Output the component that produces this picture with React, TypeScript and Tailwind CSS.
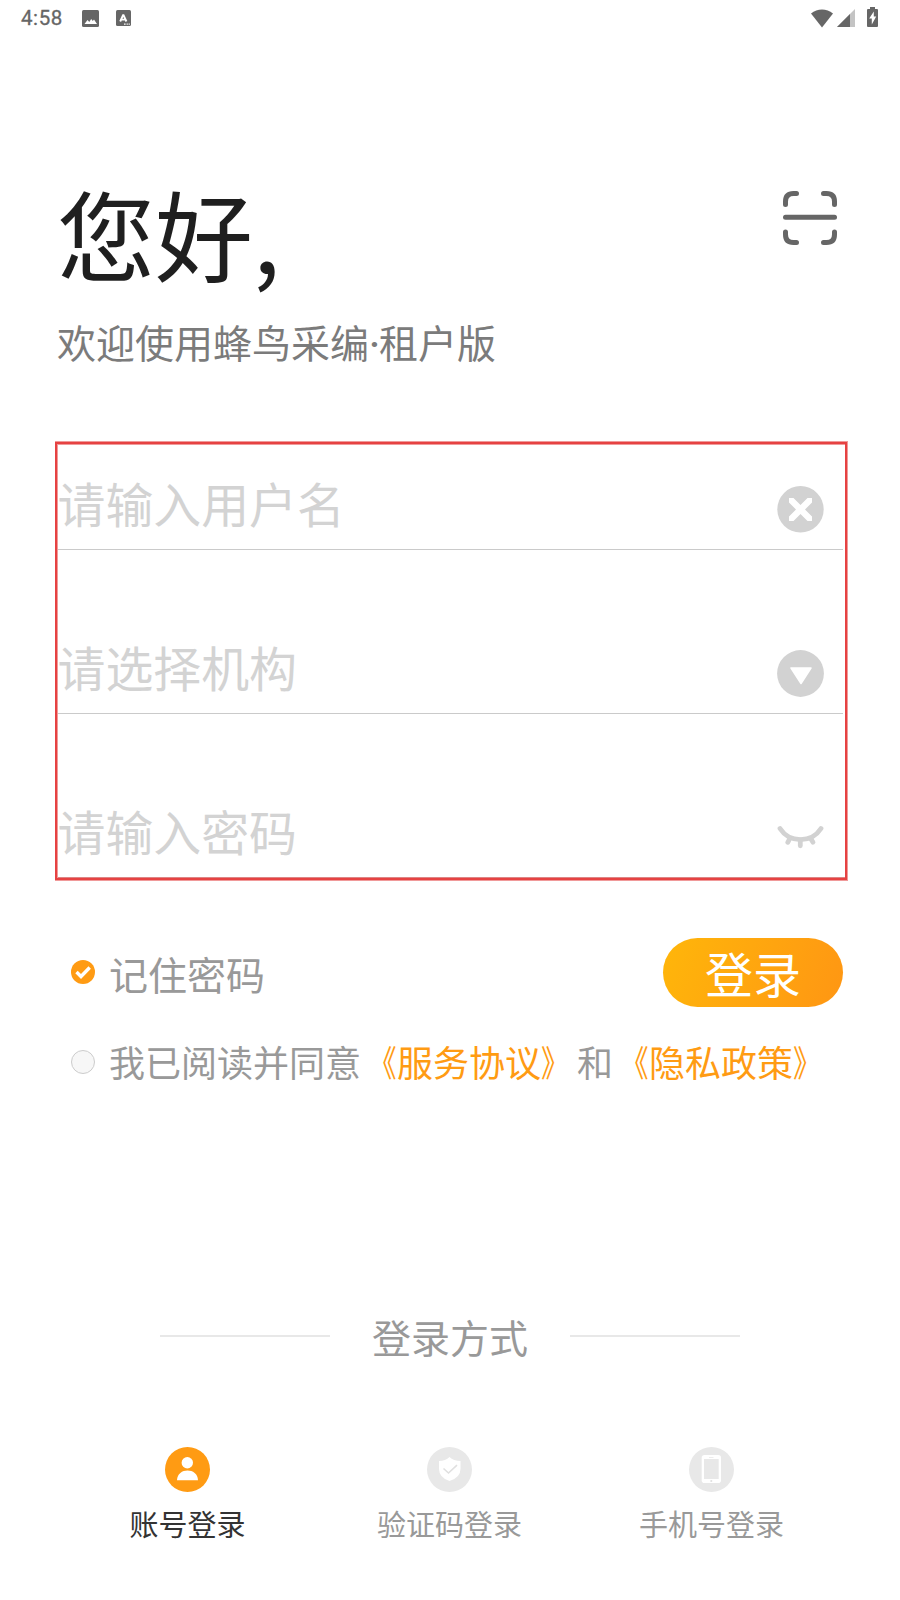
import { useState } from 'react';
import type { ReactNode } from 'react';

interface FieldProps {
  placeholder: string;
  icon: ReactNode;
  last?: boolean;
}

interface LoginMethod {
  id: string;
  label: string;
  icon: ReactNode;
}

function StatusBar() {
  return (
    <div className="flex h-9 items-center justify-between pl-[21px] pr-[21px] text-[#666666]">
      <div className="flex items-center">
        <span className="w-[61px] font-['Roboto'] text-[20.5px] font-normal leading-[38px] tracking-[0.6px] [-webkit-text-stroke:0.3px_#666666]">4:58</span>
        <svg className="mr-[17px] h-[17px] w-[17px]" viewBox="0 0 17 17">
          <rect width="17" height="17" rx="1.5" fill="currentColor" />
          <path d="M2.5 14 L5.5 10 L7.3 12 L9.2 9 L10.8 11 L12 9.5 L15 14 Z" fill="#fff" />
        </svg>
        <svg className="h-4 w-[15px]" viewBox="0 0 15 16">
          <rect width="15" height="16" rx="1.5" fill="currentColor" />
          <path d="M4.2 11.5 L7.3 4.6 L10.4 11.5 M5.4 9.6 H9.2" fill="none" stroke="#fff" strokeWidth="1.9" strokeLinejoin="bevel" />
          <path d="M8 14.2 H9.6 M10.6 14.2 H11.8 M12.6 14.2 H13.8" stroke="#fff" strokeWidth="1.3" />
        </svg>
      </div>
      <div className="flex items-center">
        <svg className="mr-1 h-[19px] w-[22px]" viewBox="0 0 22 19">
          <path d="M0 4.6 C6.5 -0.9 15.5 -0.9 22 4.6 L11 18.4 Z" fill="currentColor" />
        </svg>
        <svg className="mr-3 h-[18px] w-[18px]" viewBox="0 0 18 18">
          <path d="M18 0 V18 H0 Z" fill="#c4c4c4" />
          <path d="M13 5 V18 H0 Z" fill="currentColor" />
        </svg>
        <svg className="-mt-[2px] h-5 w-3" viewBox="0 0 12 20">
          <path d="M3 0 H8 V2 H10 Q11 2 11 3 V19 Q11 20 10 20 H1 Q0 20 0 19 V3 Q0 2 1 2 H3 Z" fill="currentColor" />
          <path d="M6.8 4.5 L2.2 11.5 H4.8 V17.5 L9.2 9.5 H6.8 Z" fill="#fff" />
        </svg>
      </div>
    </div>
  );
}

function ScanIcon() {
  return (
    <svg className="h-[54px] w-[54px]" viewBox="0 0 54 54" fill="none" stroke="#666666" strokeWidth="5" strokeLinecap="round">
      <path d="M2.5 13.5 V10.5 Q2.5 2.5 10.5 2.5 H13.5" />
      <path d="M40.5 2.5 H43.5 Q51.5 2.5 51.5 10.5 V13.5" />
      <path d="M2.5 41 V43.5 Q2.5 51.5 10.5 51.5 H13.5" />
      <path d="M40.5 51.5 H43.5 Q51.5 51.5 51.5 43.5 V41" />
      <path d="M2.5 26.3 H51.5" />
    </svg>
  );
}

function ClearIcon() {
  return (
    <svg className="h-[47px] w-[47px]" viewBox="0 0 47 47">
      <circle cx="23.5" cy="23.3" r="23.2" fill="#d2d2d2" />
      <path d="M12 12 H16.5 L23.5 19 L30.5 12 H35 V16.5 L28 23.5 L35 30.5 V35 H30.5 L23.5 28 L16.5 35 H12 V30.5 L19 23.5 L12 16.5 Z" fill="#fff" />
    </svg>
  );
}

function DropdownIcon() {
  return (
    <svg className="h-[47px] w-[47px]" viewBox="0 0 47 47">
      <circle cx="23.5" cy="23.5" r="23.4" fill="#d2d2d2" />
      <path d="M14 18 H34 L24 33.5 Z" fill="#fff" stroke="#fff" strokeWidth="1.5" strokeLinejoin="round" />
    </svg>
  );
}

function EyeClosedIcon() {
  return (
    <svg className="h-[47px] w-[47px]" viewBox="0 0 47 47" fill="none" stroke="#d2d2d2" strokeWidth="4.8" strokeLinecap="round">
      <path d="M3 14.5 C12.5 29.3 34.5 29.3 44 14.5" />
      <path d="M12.8 24.5 L10.8 28.3 M23.3 26 V31.8 M33.6 24.5 L36 28.3" />
    </svg>
  );
}

function Field({ placeholder, icon, last = false }: FieldProps) {
  return (
    <div className="h-[164px] pt-[88px]">
      <div className={`flex h-[76px] items-start justify-between border-b pr-[19px] ${last ? 'border-transparent' : 'border-[#cacaca]'}`}>
        <span className="-ml-[0.5px] text-[47.9px] leading-[56px] text-[#d3d3d3]">{placeholder}</span>
        <div className="pt-[12px]">{icon}</div>
      </div>
    </div>
  );
}

// Book-title brackets are set narrower than the surrounding characters
function AgreementLink({ title }: { title: string }) {
  return (
    <span className="text-[#ff9b13]">
      <span className="inline-block w-[36px] origin-[94%_50%] scale-x-[0.78]">《</span>
      {title}
      <span className="inline-block w-[36px] origin-[0%_50%] scale-x-[0.78]">》</span>
    </span>
  );
}

const methods: LoginMethod[] = [
  {
    id: 'account',
    label: '账号登录',
    icon: (
      <>
        <circle cx="22.3" cy="15.7" r="5.7" fill="#fff" />
        <path d="M12 33.2 C12.3 20.3 32.7 20.3 33 33.2 Z" fill="#fff" />
      </>
    ),
  },
  {
    id: 'code',
    label: '验证码登录',
    icon: (
      <>
        <path d="M22.5 10 Q26.5 13.8 33.5 14 V22 Q33.5 30.5 22.5 34 Q12 30.5 12 22 V14 Q18.5 13.8 22.5 10 Z" fill="#fff" />
        <path d="M16.5 21.5 L21.5 26 L30 18.2" fill="none" stroke="#e0e0e0" strokeWidth="1.6" />
      </>
    ),
  },
  {
    id: 'phone',
    label: '手机号登录',
    icon: (
      <>
        <rect x="12.7" y="8" width="19.3" height="28" rx="2.8" fill="#fff" />
        <rect x="15" y="12" width="14.7" height="20" fill="#e8e8e8" />
        <path d="M20 10.5 H24.5" stroke="#e8e8e8" strokeWidth="0.8" />
        <circle cx="22.3" cy="34" r="1.1" fill="#e0e0e0" />
      </>
    ),
  },
];

export default function App() {
  const [active, setActive] = useState('account');

  return (
    <div className="h-[1600px] w-[900px] overflow-hidden bg-white font-['Noto_Sans_CJK_SC',sans-serif]" lang="zh-CN">
      <StatusBar />

      {/* Greeting */}
      <div className="flex h-[405px] items-start justify-between pl-[57px] pr-[63px] pt-[145px]">
        <div>
          <h1 className="text-[98px] leading-[100px] text-[#1f1f1f]">您好,</h1>
          <p className="mt-[35px] text-[39px] leading-[50px] text-[#7b7b7b]">
            欢迎使用蜂鸟采编<span className="inline-block w-[10px] text-center font-['Roboto'] font-medium">·</span>租户版
          </p>
        </div>
        <div className="pt-[10px]">
          <ScanIcon />
        </div>
      </div>

      {/* Form */}
      <div className="ml-[55px] h-[440px] w-[793px] border-y border-r border-[#f09a9a]">
        <div className="h-[438px] overflow-hidden border-2 border-[#e64242] shadow-[inset_1px_0_0_#f09a9a,inset_0_1px_0_#f09a9a,inset_0_-1px_0_#dd8585]">
          <div className="-mt-[58px] ml-px w-[785px]">
            <Field placeholder="请输入用户名" icon={<ClearIcon />} />
            <Field placeholder="请选择机构" icon={<DropdownIcon />} />
            <Field placeholder="请输入密码" icon={<EyeClosedIcon />} last />
          </div>
        </div>
      </div>

      <div className="mt-[57px] flex h-[69px] items-center justify-between pl-[71px] pr-[57px]">
        <label className="flex items-center">
          <svg className="-mt-[2px] h-6 w-6" viewBox="0 0 24 24">
            <circle cx="12" cy="12" r="12" fill="#ff9b13" />
            <path d="M5.5 12 L10 16.5 L18.7 7.5" fill="none" stroke="#fff" strokeWidth="3.4" />
          </svg>
          <span className="ml-[14px] text-[39px] leading-[50px] text-[#999999]">记住密码</span>
        </label>
        <button className="h-[69px] w-[180px] rounded-full bg-linear-[110deg,#ffb60a,#ff9613] pb-px text-[48px] leading-[68px] text-white">
          登录
        </button>
      </div>

      <div className="mt-[28px] flex h-[50px] items-center pl-[71px]">
        <span className="mt-[4px] h-6 w-6 rounded-full border border-[#cccccc] bg-[#f7f7f7]" />
        <p className="ml-[14px] mt-[2px] whitespace-nowrap text-[36px] leading-[50px] text-[#999999]">
          我已阅读并同意<AgreementLink title="服务协议" />和<AgreementLink title="隐私政策" />
        </p>
      </div>

      {/* Login methods */}
      <div className="mt-[226px] flex h-[50px] items-center justify-center">
        <span className="h-[2px] w-[170px] bg-[#e8e8e8]" />
        <span className="w-[240px] text-center text-[39px] leading-[50px] text-[#999999]">登录方式</span>
        <span className="h-[2px] w-[170px] bg-[#e8e8e8]" />
      </div>

      <div className="ml-[56px] mt-[86px] grid w-[786px] grid-cols-3">
        {methods.map(method => (
          <button key={method.id} onClick={() => setActive(method.id)} className="flex flex-col items-center">
            <svg className="h-[45px] w-[45px]" viewBox="0 0 45 45">
              <circle cx="22.5" cy="22.5" r="22.5" fill={active === method.id ? '#ff9b13' : '#e8e8e8'} />
              {method.icon}
            </svg>
            <span className={`ml-px mt-[11px] text-[29px] leading-[40px] ${active === method.id ? 'text-[#333333]' : 'text-[#999999]'}`}>
              {method.label}
            </span>
          </button>
        ))}
      </div>
    </div>
  );
}
